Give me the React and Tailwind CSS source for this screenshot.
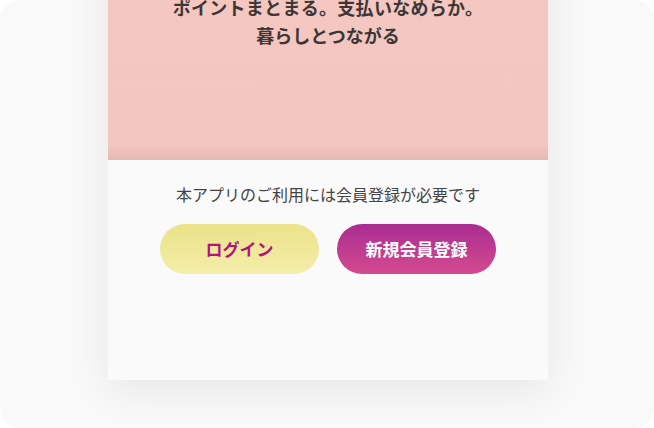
export default function App() {
  return (
    <div className="min-h-screen bg-white">
      <div
        className="h-[428px] w-[654px] overflow-hidden rounded-[20px] bg-[#f9f9f9]"
        style={{ fontFamily: '"Noto Sans CJK JP", "Noto Sans", sans-serif' }}
      >
        <div className="ml-[108px] -mt-[40px] w-[440px] shadow-[0_10px_40px_rgba(0,0,0,0.08)]">
          {/* Hero */}
          <div className="h-[200px] bg-[linear-gradient(to_bottom,#f4c7c0_0%,#f3c6bf_92%,#e8b9b3_100%)] pt-[33px] text-center text-[18px] font-bold leading-[28px] text-[#3d3636]">
            <p className="tracking-[0.3px]">ポイントまとまる。支払いなめらか。</p>
            <p>暮らしとつながる</p>
          </div>

          {/* Registration */}
          <div className="flex h-[220px] flex-col items-center bg-[#fafafa] pt-[22px]">
            <p className="text-[16px] leading-[24px] text-[#444]">本アプリのご利用には会員登録が必要です</p>
            <div className="mt-[18px] flex gap-[18px]">
              <button className="flex h-[50px] w-[159px] items-center justify-center rounded-full bg-[linear-gradient(to_bottom,#ebe288,#f4eeaa)] text-[17px] font-bold text-[#b3137f]">
                ログイン
              </button>
              <button className="flex h-[50px] w-[159px] items-center justify-center rounded-full bg-[linear-gradient(to_bottom,#a92d91,#d44a8e)] text-[17px] font-bold text-white">
                新規会員登録
              </button>
            </div>
          </div>
        </div>
      </div>
    </div>
  );
}
